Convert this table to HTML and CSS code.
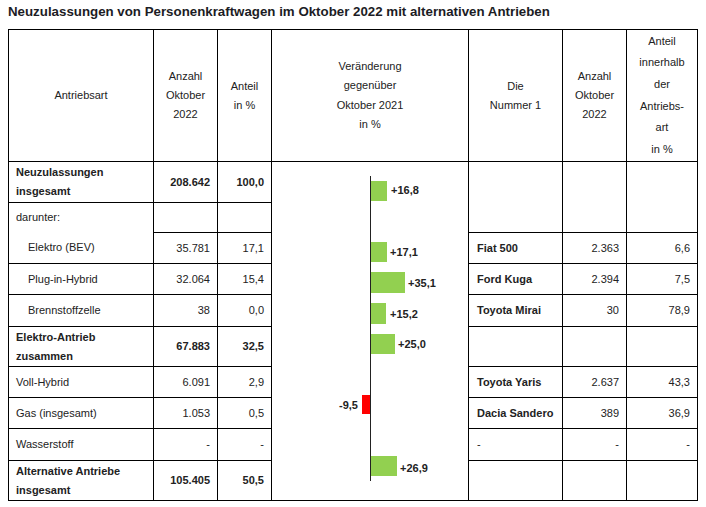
FILE: index.html
```html
<!DOCTYPE html>
<html lang="de">
<head>
<meta charset="utf-8">
<title>Neuzulassungen Oktober 2022</title>
<link rel="stylesheet" href="styles.css">
</head>
<body>
<div class="title">Neuzulassungen von Personenkraftwagen im Oktober 2022 mit alternativen Antrieben</div>
<table class="stats">
  <colgroup>
    <col class="c1"><col class="c2"><col class="c3"><col class="c4"><col class="c5"><col class="c6"><col class="c7">
  </colgroup>
  <tr class="r-head">
    <th>Antriebsart</th>
    <th>Anzahl<br>Oktober<br>2022</th>
    <th>Anteil<br>in %</th>
    <th class="chg">Veränderung<br>gegenüber<br>Oktober 2021<br>in %</th>
    <th>Die<br>Nummer 1</th>
    <th>Anzahl<br>Oktober<br>2022</th>
    <th class="tall">Anteil<br>innerhalb<br>der<br>Antriebs-<br>art<br>in %</th>
  </tr>
  <tr class="r41">
    <td class="b">Neuzulassungen<br>insgesamt</td>
    <td class="num b">208.642</td>
    <td class="num b">100,0</td>
    <td class="chart" rowspan="10">
      <svg class="bars" width="196" height="338" viewBox="0 0 196 338">
        <line x1="98.5" y1="14" x2="98.5" y2="319" stroke="#222" stroke-width="1"/>
        <rect x="99" y="19" width="16" height="20" fill="#92d050"/>
        <text x="119" y="32">+16,8</text>
        <rect x="99" y="80" width="16" height="20" fill="#92d050"/>
        <text x="118" y="94">+17,1</text>
        <rect x="99" y="110" width="34" height="21" fill="#92d050"/>
        <text x="136" y="125">+35,1</text>
        <rect x="99" y="141" width="15" height="21" fill="#92d050"/>
        <text x="118" y="156">+15,2</text>
        <rect x="99" y="172" width="24" height="20" fill="#92d050"/>
        <text x="126" y="186">+25,0</text>
        <rect x="90" y="233" width="8" height="19" fill="#ff0000"/>
        <text x="86" y="247" text-anchor="end">-9,5</text>
        <rect x="99" y="294" width="26" height="20" fill="#92d050"/>
        <text x="128" y="310">+26,9</text>
      </svg>
    </td>
    <td rowspan="2"></td>
    <td rowspan="2"></td>
    <td rowspan="2"></td>
  </tr>
  <tr class="r30">
    <td class="open-bottom">darunter:</td>
    <td></td>
    <td></td>
  </tr>
  <tr class="r31">
    <td class="ind">Elektro (BEV)</td>
    <td class="num">35.781</td>
    <td class="num">17,1</td>
    <td class="b name">Fiat 500</td>
    <td class="num">2.363</td>
    <td class="num">6,6</td>
  </tr>
  <tr class="r31">
    <td class="ind">Plug-in-Hybrid</td>
    <td class="num">32.064</td>
    <td class="num">15,4</td>
    <td class="b name">Ford Kuga</td>
    <td class="num">2.394</td>
    <td class="num">7,5</td>
  </tr>
  <tr class="r32">
    <td class="ind">Brennstoffzelle</td>
    <td class="num">38</td>
    <td class="num">0,0</td>
    <td class="b name">Toyota Mirai</td>
    <td class="num">30</td>
    <td class="num">78,9</td>
  </tr>
  <tr class="r40">
    <td class="b">Elektro-Antrieb<br>zusammen</td>
    <td class="num b">67.883</td>
    <td class="num b">32,5</td>
    <td></td>
    <td></td>
    <td></td>
  </tr>
  <tr class="r31">
    <td>Voll-Hybrid</td>
    <td class="num">6.091</td>
    <td class="num">2,9</td>
    <td class="b name">Toyota Yaris</td>
    <td class="num">2.637</td>
    <td class="num">43,3</td>
  </tr>
  <tr class="r31">
    <td>Gas (insgesamt)</td>
    <td class="num">1.053</td>
    <td class="num">0,5</td>
    <td class="b name">Dacia Sandero</td>
    <td class="num">389</td>
    <td class="num">36,9</td>
  </tr>
  <tr class="r32">
    <td>Wasserstoff</td>
    <td class="num">-</td>
    <td class="num">-</td>
    <td class="name">-</td>
    <td class="num">-</td>
    <td class="num">-</td>
  </tr>
  <tr class="r40">
    <td class="b">Alternative Antriebe<br>insgesamt</td>
    <td class="num b">105.405</td>
    <td class="num b">50,5</td>
    <td></td>
    <td></td>
    <td></td>
  </tr>
</table>
</body>
</html>
```
FILE: styles.css
```css
html, body {
  background: #fff;
}
body {
  margin: 0;
  padding: 3px 8px 0;
  font-family: "Liberation Sans", Arial, sans-serif;
  color: #222;
}
.title {
  font-size: 13.3px;
  font-weight: bold;
  line-height: 17px;
  color: #1c1c24;
  margin: 0 0 9px;
}
.stats {
  border-collapse: collapse;
  table-layout: fixed;
  width: 690px;
  font-size: 11px;
  line-height: 19px;
}
.c1 { width: 145px; }
.c2 { width: 64px; }
.c3 { width: 54px; }
.c4 { width: 197px; }
.c5 { width: 94px; }
.c6 { width: 64px; }
.c7 { width: 71px; }
.stats th,
.stats td {
  border: 1px solid #000;
  padding: 0 7px;
  vertical-align: middle;
  text-align: left;
}
.stats th {
  font-weight: normal;
  text-align: center;
  padding: 0 3px;
}
.stats th.chg {
  line-height: 19.5px;
}
.stats th.tall {
  line-height: 21.6px;
}
.r-head { height: 132px; }
.r41 { height: 41px; }
.r30 { height: 30px; }
.r31 { height: 31px; }
.r32 { height: 32px; }
.r40 { height: 40px; }
.stats .num {
  text-align: right;
}
.stats .b {
  font-weight: bold;
}
.stats .ind {
  padding-left: 19px;
}
.stats .name {
  padding-left: 8px;
}
.stats .open-bottom {
  border-bottom-style: hidden;
}
.stats td.chart {
  position: relative;
  padding: 0;
  vertical-align: top;
}
.bars {
  position: absolute;
  left: 0;
  top: 0;
  overflow: visible;
}
.bars text {
  font-family: "Liberation Sans", Arial, sans-serif;
  font-size: 11px;
  font-weight: bold;
  fill: #222;
}
```
